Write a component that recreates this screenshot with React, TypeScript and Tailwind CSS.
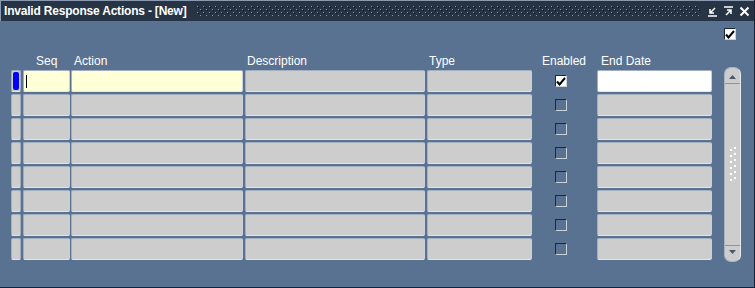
import React from 'react';

const rows = Array.from({ length: 8 }, (_, i) => i);

const Field = ({ w, active, white }: { w: string; active?: boolean; white?: boolean }) => (
  <div
    className={`${w} shrink-0 h-[22px] rounded-[2px] border border-[#a3afbf] border-b-[#e2e6ea] border-r-[#c9d0d8] ${
      white ? 'bg-white' : active ? 'bg-[#ffffd8]' : 'bg-[#cdcdcd]'
    }`}
  />
);

const CheckBox = ({ checked }: { checked?: boolean }) => (
  <div
    className={`w-[12px] h-[12px] border border-t-[#1e2838] border-l-[#1e2838] border-b-[#c8d0d8] border-r-[#c8d0d8] flex items-center justify-center ${
      checked ? 'bg-white' : ''
    }`}
  >
    {checked && (
      <svg width="10" height="9" viewBox="0 0 10 9">
        <path d="M1 4.5 L3.5 7.5 L9 1" stroke="#000" strokeWidth="2" fill="none" />
      </svg>
    )}
  </div>
);

const Dots = () => (
  <svg className="flex-1 h-[10px] ml-[10px] mr-[6px]" preserveAspectRatio="none">
    <defs>
      <pattern id="dots" width="6" height="6" patternUnits="userSpaceOnUse">
        <rect x="0" y="0" width="1" height="1" fill="#8a96a8" />
        <rect x="3" y="3" width="1" height="1" fill="#8a96a8" />
        <rect x="1" y="1" width="1" height="1" fill="#0e1622" />
        <rect x="4" y="4" width="1" height="1" fill="#0e1622" />
      </pattern>
    </defs>
    <rect width="100%" height="100%" fill="url(#dots)" />
  </svg>
);

const App: React.FC = () => {
  return (
    <div
      className="w-[755px] h-[288px] bg-[#5a7292] flex flex-col border-b border-r border-[#1a2230] overflow-hidden"
      style={{ fontFamily: '"Liberation Sans", Arial, sans-serif' }}
    >
      <div className="h-[21px] shrink-0 bg-[#263446] border-t border-l border-[#8a9ab0] flex items-center pl-[3px] pr-[4px]">
        <span className="text-white font-bold text-[12px] tracking-[-0.2px]">Invalid Response Actions - [New]</span>
        <Dots />
        <div className="flex items-center gap-[5px]">
          <svg width="11" height="11" viewBox="0 0 11 11">
            <path d="M8 2 L3 7 M3 3 L3 7 L7 7 M1 10 H10" stroke="#fff" strokeWidth="1.5" fill="none" />
          </svg>
          <svg width="11" height="11" viewBox="0 0 11 11">
            <path d="M1 1 H10 M3 9 L8 4 M4 4 H8 V8" stroke="#fff" strokeWidth="1.5" fill="none" />
          </svg>
          <svg width="11" height="11" viewBox="0 0 11 11">
            <path d="M1.5 1.5 L9.5 9.5 M9.5 1.5 L1.5 9.5" stroke="#fff" strokeWidth="2" fill="none" />
          </svg>
        </div>
      </div>

      <div className="flex justify-end pr-[18px] pt-[7px]">
        <CheckBox checked />
      </div>

      <div className="flex pl-[11px] pt-[13px]">
        <div className="flex flex-col">
          <div className="flex h-[16px] items-end text-white text-[12px] leading-none pb-[2px]">
            <span className="w-[12px] shrink-0" />
            <span className="w-[48px] shrink-0 pl-[13px]">Seq</span>
            <span className="w-[174px] shrink-0 pl-[3px]">Action</span>
            <span className="w-[182px] shrink-0 pl-[2px]">Description</span>
            <span className="w-[105px] shrink-0 pl-[2px]">Type</span>
            <span className="w-[65px] shrink-0 pl-[10px]">Enabled</span>
            <span className="pl-[4px]">End Date</span>
          </div>
          <div className="flex flex-col gap-[2px] pt-[1px]">
            {rows.map((i) => (
              <div key={i} className="flex items-center h-[22px]">
                <div className="w-[10px] shrink-0 h-[22px] rounded-[2px] border border-[#a3afbf] border-b-[#e2e6ea] bg-[#cdcdcd] flex items-stretch justify-center py-[1px]">
                  {i === 0 && <div className="w-[6px] bg-[#0000ff] rounded-[2px]" />}
                </div>
                <div className="w-[2px] shrink-0" />
                <div className="relative">
                  <Field w="w-[47px]" active={i === 0} />
                  {i === 0 && <div className="absolute left-[3px] top-[5px] w-[1px] h-[13px] bg-black" />}
                </div>
                <div className="w-[1px] shrink-0" />
                <Field w="w-[172px]" active={i === 0} />
                <div className="w-[2px] shrink-0" />
                <Field w="w-[180px]" />
                <div className="w-[2px] shrink-0" />
                <Field w="w-[105px]" />
                <div className="w-[65px] shrink-0 flex justify-start pl-[23px]">
                  <CheckBox checked={i === 0} />
                </div>
                <Field w="w-[115px]" white={i === 0} />
              </div>
            ))}
          </div>
        </div>

        <div className="ml-[12px] mt-[14px] w-[17px] h-[195px] rounded-[7px] border border-[#a8b4c2] border-r-[#e6e9ee] bg-[#cdcdcd] flex flex-col items-center justify-between py-[3px]">
          <div className="flex flex-col items-center w-full">
            <svg width="9" height="6" viewBox="0 0 9 6" className="mt-[3px]">
              <path d="M1 5 L4.5 1 L8 5 Z" fill="#4a5870" />
            </svg>
            <div className="w-full h-[1px] bg-[#8796aa] mt-[3px]" />
          </div>
          <svg width="8" height="40" viewBox="0 0 8 40">
            {[0, 1, 2, 3, 4, 5].map((k) => (
              <g key={k}>
                <rect x="1" y={k * 6 + 4} width="2" height="2" fill="#fff" />
                <rect x="5" y={k * 6 + 2} width="2" height="2" fill="#fff" />
              </g>
            ))}
          </svg>
          <div className="flex flex-col items-center w-full">
            <div className="w-full h-[1px] bg-[#8796aa] mb-[3px]" />
            <svg width="9" height="6" viewBox="0 0 9 6" className="mb-[3px]">
              <path d="M1 1 L4.5 5 L8 1 Z" fill="#4a5870" />
            </svg>
          </div>
        </div>
      </div>
    </div>
  );
};

export default App;
